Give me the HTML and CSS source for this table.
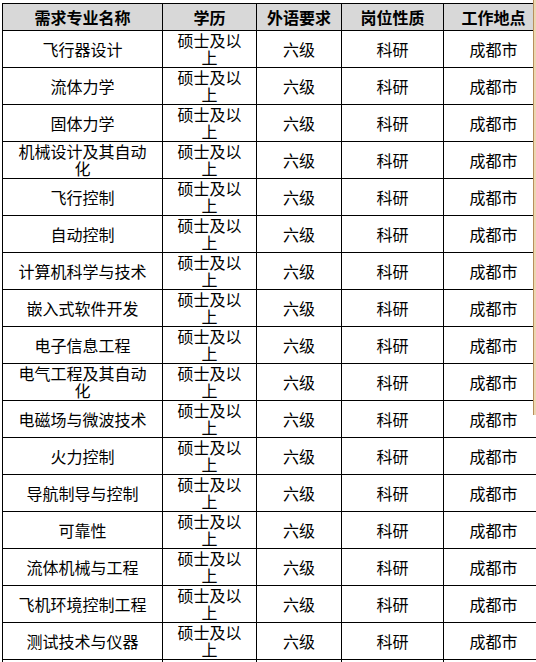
FILE: index.html
```html
<!DOCTYPE html>
<html lang="zh-CN">
<head>
<meta charset="utf-8">
<title>需求专业</title>
<link rel="stylesheet" href="styles.css">
</head>
<body>
<table class="jobs">
  <colgroup>
    <col class="c-major"><col class="c-edu"><col class="c-lang"><col class="c-type"><col class="c-place">
  </colgroup>
  <thead>
    <tr><th>需求专业名称</th><th>学历</th><th>外语要求</th><th>岗位性质</th><th>工作地点</th></tr>
  </thead>
  <tbody>
    <tr><td>飞行器设计</td><td>硕士及以上</td><td>六级</td><td>科研</td><td>成都市</td></tr>
    <tr><td>流体力学</td><td>硕士及以上</td><td>六级</td><td>科研</td><td>成都市</td></tr>
    <tr><td>固体力学</td><td>硕士及以上</td><td>六级</td><td>科研</td><td>成都市</td></tr>
    <tr><td>机械设计及其自动化</td><td>硕士及以上</td><td>六级</td><td>科研</td><td>成都市</td></tr>
    <tr><td>飞行控制</td><td>硕士及以上</td><td>六级</td><td>科研</td><td>成都市</td></tr>
    <tr><td>自动控制</td><td>硕士及以上</td><td>六级</td><td>科研</td><td>成都市</td></tr>
    <tr><td>计算机科学与技术</td><td>硕士及以上</td><td>六级</td><td>科研</td><td>成都市</td></tr>
    <tr><td>嵌入式软件开发</td><td>硕士及以上</td><td>六级</td><td>科研</td><td>成都市</td></tr>
    <tr><td>电子信息工程</td><td>硕士及以上</td><td>六级</td><td>科研</td><td>成都市</td></tr>
    <tr><td>电气工程及其自动化</td><td>硕士及以上</td><td>六级</td><td>科研</td><td>成都市</td></tr>
    <tr><td>电磁场与微波技术</td><td>硕士及以上</td><td>六级</td><td>科研</td><td>成都市</td></tr>
    <tr><td>火力控制</td><td>硕士及以上</td><td>六级</td><td>科研</td><td>成都市</td></tr>
    <tr><td>导航制导与控制</td><td>硕士及以上</td><td>六级</td><td>科研</td><td>成都市</td></tr>
    <tr><td>可靠性</td><td>硕士及以上</td><td>六级</td><td>科研</td><td>成都市</td></tr>
    <tr><td>流体机械与工程</td><td>硕士及以上</td><td>六级</td><td>科研</td><td>成都市</td></tr>
    <tr><td>飞机环境控制工程</td><td>硕士及以上</td><td>六级</td><td>科研</td><td>成都市</td></tr>
    <tr><td>测试技术与仪器</td><td>硕士及以上</td><td>六级</td><td>科研</td><td>成都市</td></tr>
    <tr><td>材料科学与工程</td><td>硕士及以上</td><td>六级</td><td>科研</td><td>成都市</td></tr>
  </tbody>
</table>
<div class="edge"></div>
</body>
</html>
```
FILE: styles.css
```css
html, body {
  margin: 0;
  padding: 0;
  overflow: hidden;
  background: #ffffff;
}
body {
  position: relative;
  width: 536px;
  height: 662px;
  font-family: "Noto Sans CJK SC", "Noto Sans", sans-serif;
  color: #000;
}
.jobs {
  border-collapse: collapse;
  table-layout: fixed;
  width: 541px;
  margin: 3px 0 0 2px;
}
.c-major { width: 160px; }
.c-edu { width: 94px; }
.c-lang { width: 85px; }
.c-type { width: 102px; }
.c-place { width: 100px; }
.jobs th, .jobs td {
  border: 1px solid #000;
  text-align: center;
  vertical-align: middle;
  padding: 0 8px;
  font-size: 16px;
  line-height: 17px;
}
.jobs th {
  background: #d8d8d8;
  font-weight: bold;
  height: 26px;
}
.jobs td {
  height: 36px;
  font-weight: normal;
}
.edge {
  position: absolute;
  left: 533px;
  top: 0;
  width: 2px;
  height: 415px;
  background: #ecd7b2;
  border-left: 1px solid #b98f5c;
}
```
